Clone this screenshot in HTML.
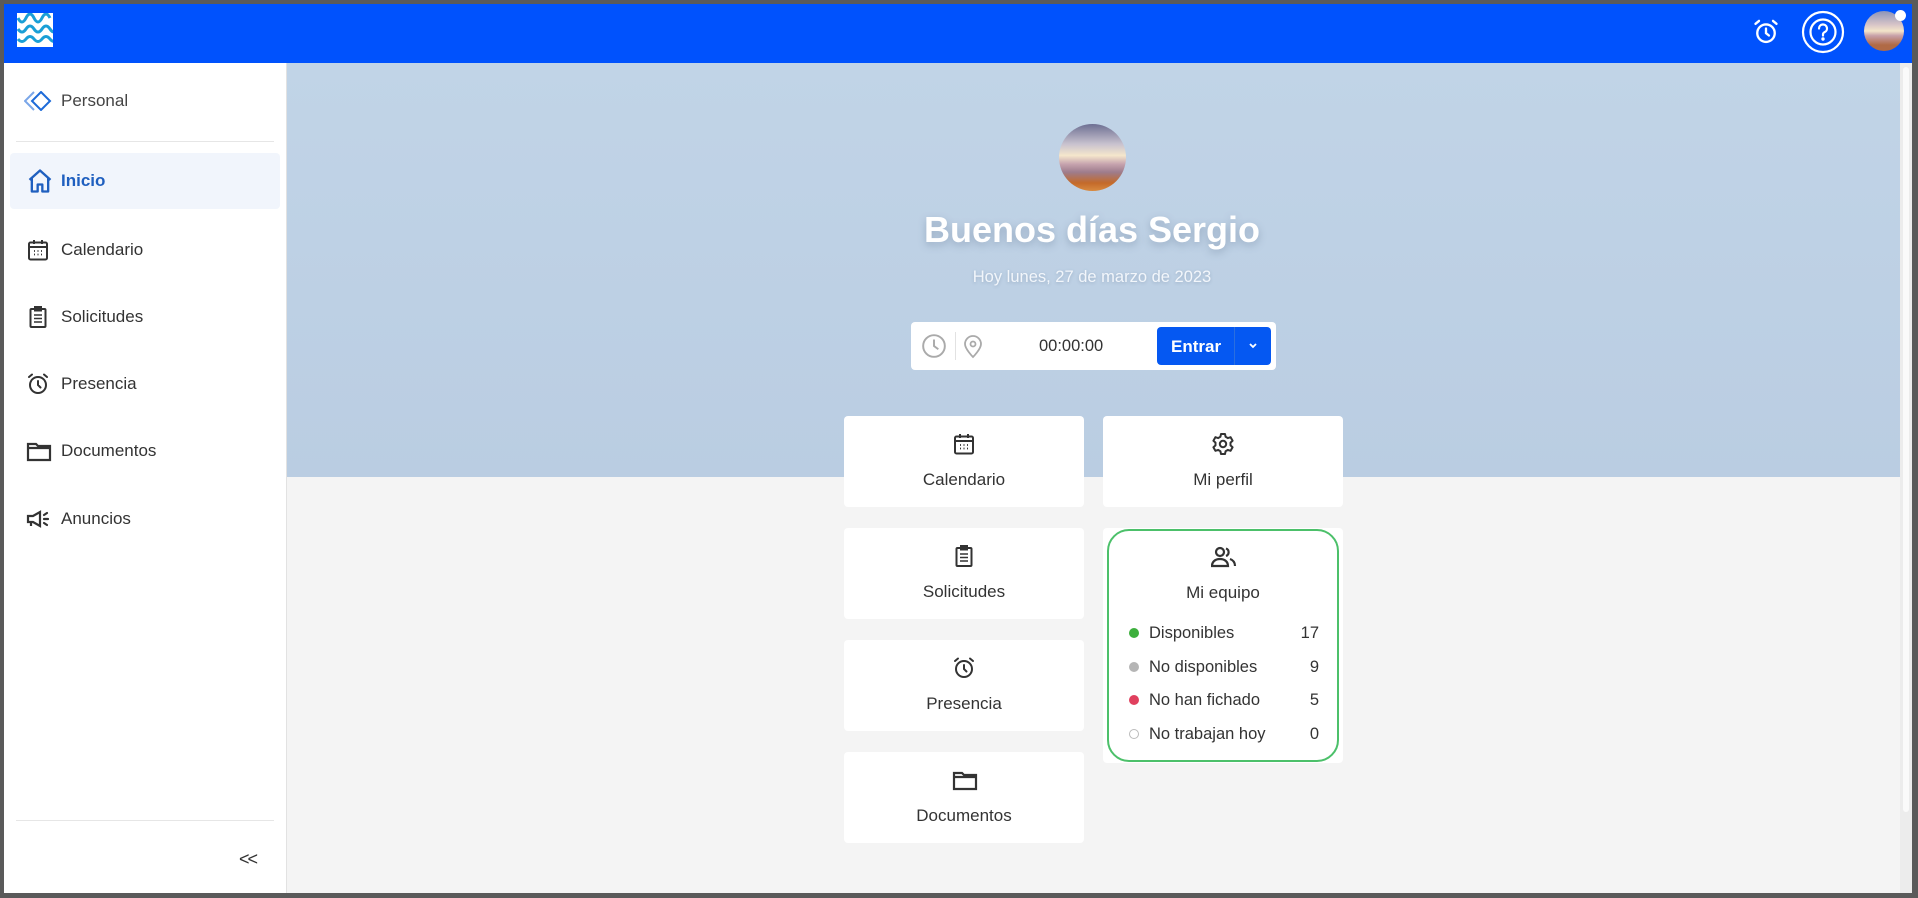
<!DOCTYPE html>
<html><head><meta charset="utf-8"><style>
*{margin:0;padding:0;box-sizing:border-box}
body{width:1918px;height:898px;background:#5a5a5a;font-family:"Liberation Sans",sans-serif;position:relative;overflow:hidden;color:#333}
.abs{position:absolute}
#hdr{left:4px;top:4px;width:1908px;height:59px;background:#0052fd}
#side{left:4px;top:63px;width:283px;height:830px;background:#fff;border-right:1px solid #e2e2e2}
#hero{left:287px;top:63px;width:1613px;height:414px;background:linear-gradient(#c1d4e7,#bacde2)}
#low{left:287px;top:477px;width:1613px;height:416px;background:#f4f4f4}
#sb{left:1900px;top:63px;width:12px;height:830px;background:#ececec}
#sb div{position:absolute;left:3px;top:4px;width:6px;height:745px;background:#fafafa;border-radius:3px}
.nav{position:absolute;left:6px;width:270px;height:54px;display:flex;align-items:center;font-size:17px;color:#333}
.nav svg{position:absolute;left:16px}
.nav span{position:absolute;left:51px}
.card{position:absolute;width:240px;height:91px;background:#fff;border-radius:4px;text-align:center;font-size:17px;color:#333}
.card svg{position:absolute;left:108px;top:16px}
.card span{position:absolute;left:0;right:0;top:54px}
.row{position:absolute;left:20px;right:18px;height:24px;font-size:16.5px;color:#333}
.row i{position:absolute;left:0;top:4px;width:10px;height:10px;border-radius:50%}
.row span{position:absolute;left:20px}
.row b{position:absolute;right:0;font-weight:normal}
</style></head><body>
<div id="hdr" class="abs">
<svg class="abs" style="left:13px;top:9px" width="36" height="34" viewBox="0 0 36 34"><rect width="36" height="34" fill="#fff"/><g fill="none" stroke="#1a9fd6" stroke-width="3"><path d="M1 5q4 8 8 0t8 0 8 0 8 0"/><path d="M1 16q4 6 8 0t8 0 8 0 8 0 8 0"/><path d="M1 26q4 5 8 0t8 0 8 0 8 0 8 0"/></g></svg>
<svg class="abs" style="left:1748px;top:14px" width="28" height="28" viewBox="0 0 24 24" fill="none" stroke="#fff" stroke-width="2" stroke-linecap="round"><circle cx="12" cy="13" r="7.5"/><path d="M12 9v4l2.5 2M3 5l3-2.5M21 5l-3-2.5"/></svg>
<svg class="abs" style="left:1797px;top:6px" width="44" height="44" viewBox="0 0 44 44" fill="none" stroke="#fff" stroke-width="2.2"><circle cx="22" cy="22" r="20"/><circle cx="22" cy="22" r="12.5"/><path d="M18 18.5a4 4 0 1 1 5.5 3.7c-1 .5-1.5 1.2-1.5 2.3v1" stroke-linecap="round"/><circle cx="22" cy="29" r=".6" fill="#fff"/></svg>
<div class="abs" style="left:1860px;top:7px;width:40px;height:40px;border-radius:50%;background:linear-gradient(#8d94b8 0%,#d9c6c8 35%,#f3e4c9 50%,#c7a0a8 62%,#b06a45 85%)"></div>
<div class="abs" style="left:1891px;top:6px;width:11px;height:11px;border-radius:50%;background:#fff"></div>
</div>
<div id="side" class="abs">
<svg class="abs" style="left:20px;top:28px" width="28" height="20" viewBox="0 0 28 20" fill="none" stroke-width="2"><path d="M10 1L1 10l9 9" stroke="#7aa6e8"/><path d="M17 1l9 9-9 9-9-9z" stroke="#1d6ad8"/></svg>
<div class="abs" style="left:57px;top:28px;font-size:17px;color:#444">Personal</div>
<div class="abs" style="left:12px;top:78px;width:258px;height:1px;background:#e6e6e6"></div>
<div class="nav" style="top:90px;height:56px;background:#f1f5fc;border-radius:4px;color:#1f5fbf;font-weight:bold">
<svg width="28" height="28" viewBox="0 0 24 24" fill="none" stroke="#1f5fbf" stroke-width="2" stroke-linejoin="round"><path d="M3 11L12 3l9 8M5 9.5V21h5v-6h4v6h5V9.5"/></svg><span>Inicio</span></div>
<div class="nav" style="top:160px"><svg width="24" height="24" viewBox="0 0 24 24" fill="none" stroke="#333" stroke-width="2"><rect x="3" y="4.5" width="18" height="17" rx="1.5"/><path d="M3 9h18M8 2v4M16 2v4"/><path d="M8 13h1M11.5 13h1M15 13h1M8 16.5h1M11.5 16.5h1M15 16.5h1" stroke-width="1.8"/></svg><span>Calendario</span></div>
<div class="nav" style="top:227px"><svg width="24" height="24" viewBox="0 0 24 24" fill="none" stroke="#333" stroke-width="2"><rect x="4.5" y="4" width="15" height="18" rx="1"/><rect x="9" y="2" width="6" height="3.5" fill="#333"/><path d="M8 10h8M8 13.5h8M8 17h8" stroke-width="1.6"/></svg><span>Solicitudes</span></div>
<div class="nav" style="top:294px"><svg width="24" height="24" viewBox="0 0 24 24" fill="none" stroke="#333" stroke-width="2" stroke-linecap="round"><circle cx="12" cy="13" r="8"/><path d="M12 9v4l2.5 2.5M3 5l3-2.5M21 5l-3-2.5"/></svg><span>Presencia</span></div>
<div class="nav" style="top:361px"><svg width="26" height="24" viewBox="0 0 26 24" fill="none" stroke="#333" stroke-width="2.2"><path d="M2 5h8l2 2h12v14H2z"/><path d="M2 9h22"/></svg><span>Documentos</span></div>
<div class="nav" style="top:429px"><svg width="26" height="24" viewBox="0 0 26 24" fill="none" stroke="#333" stroke-width="2.2"><path d="M2 9h5l7-4v14l-7-4H2zM5 15v4"/><path d="M18 8l3-2M18 12h4M18 16l3 2" stroke-linecap="round"/></svg><span>Anuncios</span></div>
<div class="abs" style="left:12px;top:757px;width:258px;height:1px;background:#e6e6e6"></div>
<div class="abs" style="left:235px;top:786px;font-size:18px;color:#333;letter-spacing:-2px">&lt;&lt;</div>
</div>
<div id="hero" class="abs"></div>
<div id="low" class="abs"></div>
<div id="sb" class="abs"><div></div></div>
<div class="abs" style="left:1059px;top:124px;width:67px;height:67px;border-radius:50%;background:linear-gradient(#6d6f93 0%,#c8c2cf 30%,#f5e7cc 47%,#c6a3ae 60%,#9e7c8c 72%,#c46a2a 88%,#d88a40 100%)"></div>
<div class="abs" style="left:787px;width:610px;top:209px;text-align:center;font-size:36px;font-weight:bold;color:#fff;text-shadow:0 3px 8px rgba(80,100,130,.35)">Buenos días Sergio</div>
<div class="abs" style="left:787px;width:610px;top:268px;text-align:center;font-size:16.5px;color:#f2f6fb;text-shadow:0 1px 3px rgba(80,100,130,.3)">Hoy lunes, 27 de marzo de 2023</div>
<div class="abs" style="left:911px;top:322px;width:365px;height:48px;background:#fff;border-radius:4px">
<svg class="abs" style="left:10px;top:11px" width="26" height="26" viewBox="0 0 24 24" fill="none" stroke="#aaa" stroke-width="1.8"><circle cx="12" cy="12" r="10"/><path d="M12 6v6l4 3"/></svg>
<div class="abs" style="left:44px;top:10px;width:1px;height:28px;background:#e2e2e2"></div>
<svg class="abs" style="left:51px;top:11px" width="22" height="26" viewBox="0 0 22 26" fill="none" stroke="#aaa" stroke-width="1.8"><path d="M11 24s-8-8-8-13a8 8 0 0 1 16 0c0 5-8 13-8 13z"/><circle cx="11" cy="11" r="2.5"/></svg>
<div class="abs" style="left:128px;top:15px;font-size:16.5px;color:#333">00:00:00</div>
<div class="abs" style="left:246px;top:5px;width:114px;height:38px;background:#0558f2;border-radius:4px;color:#fff;font-size:17px;font-weight:bold">
<span class="abs" style="left:14px;top:10px">Entrar</span>
<div class="abs" style="left:77px;top:0;width:1px;height:38px;background:#2a6ee0"></div>
<svg class="abs" style="left:91px;top:15px" width="10" height="8" viewBox="0 0 10 8" fill="none" stroke="#fff" stroke-width="1.8"><path d="M2 2l3 3 3-3"/></svg>
</div></div>
<div class="card" style="left:844px;top:416px"><svg width="24" height="24" viewBox="0 0 24 24" fill="none" stroke="#333" stroke-width="2"><rect x="3" y="4.5" width="18" height="17" rx="1.5"/><path d="M3 9h18M8 2v4M16 2v4"/><path d="M8 13h1M11.5 13h1M15 13h1M8 16.5h1M11.5 16.5h1M15 16.5h1" stroke-width="1.8"/></svg><span>Calendario</span></div>
<div class="card" style="left:1103px;top:416px"><svg width="24" height="24" viewBox="0 0 24 24" fill="none" stroke="#333" stroke-width="2" stroke-linejoin="round"><circle cx="12" cy="12" r="3.2"/><path d="M10 2h4l.6 2.8 2.3 1.3 2.7-.9 2 3.5-2.1 1.9v2.8l2.1 1.9-2 3.5-2.7-.9-2.3 1.3L14 22h-4l-.6-2.8-2.3-1.3-2.7.9-2-3.5 2.1-1.9v-2.8L2.4 8.7l2-3.5 2.7.9 2.3-1.3z"/></svg><span>Mi perfil</span></div>
<div class="card" style="left:844px;top:528px"><svg width="24" height="24" viewBox="0 0 24 24" fill="none" stroke="#333" stroke-width="2"><rect x="4.5" y="4" width="15" height="18" rx="1"/><rect x="9" y="2" width="6" height="3.5" fill="#333"/><path d="M8 10h8M8 13.5h8M8 17h8" stroke-width="1.6"/></svg><span>Solicitudes</span></div>
<div class="card" style="left:844px;top:640px"><svg width="24" height="24" viewBox="0 0 24 24" fill="none" stroke="#333" stroke-width="2" stroke-linecap="round"><circle cx="12" cy="13" r="8"/><path d="M12 9v4l2.5 2.5M3 5l3-2.5M21 5l-3-2.5"/></svg><span>Presencia</span></div>
<div class="card" style="left:844px;top:752px"><svg width="26" height="24" viewBox="0 0 26 24" fill="none" stroke="#333" stroke-width="2.2"><path d="M2 5h8l2 2h12v14H2z"/><path d="M2 9h22"/></svg><span>Documentos</span></div>
<div class="abs" style="left:1103px;top:528px;width:240px;height:235px;background:#fff;border-radius:4px">
<div class="abs" style="left:4px;top:1px;width:232px;height:233px;border:2px solid #4cc06a;border-radius:22px">
<svg class="abs" style="left:102px;top:14px" width="26" height="24" viewBox="0 0 26 24" fill="none" stroke="#333" stroke-width="2.2"><circle cx="9" cy="7" r="4"/><path d="M1 21c0-4 3-7 8-7s8 3 8 7zM15 3.5a4 4 0 0 1 0 7.5M19 14c3 1 5 3 5 7"/></svg>
<div class="abs" style="left:0;right:0;top:52px;text-align:center;font-size:17px">Mi equipo</div>
<div class="row" style="top:93px"><i style="background:#3daf3d"></i><span>Disponibles</span><b>17</b></div>
<div class="row" style="top:127px"><i style="background:#b5b5b5"></i><span>No disponibles</span><b>9</b></div>
<div class="row" style="top:160px"><i style="background:#e0405e"></i><span>No han fichado</span><b>5</b></div>
<div class="row" style="top:194px"><i style="border:1px solid #bbb"></i><span>No trabajan hoy</span><b>0</b></div>
</div></div>
</body></html>
